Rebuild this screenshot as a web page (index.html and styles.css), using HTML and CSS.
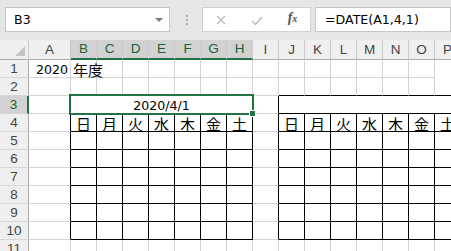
FILE: index.html
```html
<!DOCTYPE html>
<html lang="ja">
<head>
    <meta charset="UTF-8">
    <title>2020 年度 - Excel</title>
    <link rel="stylesheet" href="styles.css">
</head>
<body>
    <div class="formula-bar">
        <div class="name-box">B3<span class="dropdown"></span></div>
        <span class="grip"></span>
        <div class="fx-buttons">
            <span class="btn btn-cancel">
                <svg width="10" height="10" viewBox="0 0 10 10"><path d="M1 1 L9 9 M9 1 L1 9" stroke="#b9b9b9" stroke-width="1.2" fill="none"/></svg>
            </span>
            <span class="btn btn-enter">
                <svg width="12" height="10" viewBox="0 0 12 10"><path d="M1 5 L4.5 8.5 L11 1" stroke="#b9b9b9" stroke-width="1.3" fill="none"/></svg>
            </span>
            <span class="btn btn-fx">f<sub>x</sub></span>
        </div>
        <div class="formula">=DATE(A1,4,1)</div>
    </div>

    <div class="sheet">
        <table class="grid">
            <thead>
                <tr>
                    <th class="corner"><span class="corner-tri"></span></th>
                    <th class="col-a">A</th>
                    <th class="sel">B</th><th class="sel">C</th><th class="sel">D</th><th class="sel">E</th><th class="sel">F</th><th class="sel">G</th><th class="sel">H</th>
                    <th>I</th><th>J</th><th>K</th><th>L</th><th>M</th><th>N</th><th>O</th><th>P</th>
                </tr>
            </thead>
            <tbody>
                <tr>
                    <th>1</th><td class="num">2020</td><td class="jp">年度</td>
                    <td></td><td></td><td></td><td></td><td></td><td></td><td></td><td></td><td></td><td></td><td></td><td></td><td></td>
                </tr>
                <tr class="pre">
                    <th>2</th><td class="gap"></td>
                    <td></td><td></td><td></td><td></td><td></td><td></td><td></td>
                    <td class="gap"></td>
                    <td></td><td></td><td></td><td></td><td></td><td></td><td></td>
                </tr>
                <tr class="cal">
                    <th class="sel-row">3</th><td class="gap"></td>
                    <td colspan="7" class="title">2020/4/1</td>
                    <td class="gap"></td>
                    <td colspan="7" class="title"></td>
                </tr>
                <tr class="cal days">
                    <th>4</th><td class="gap"></td>
                    <td>日</td><td>月</td><td>火</td><td>水</td><td>木</td><td>金</td><td>土</td>
                    <td class="gap"></td>
                    <td>日</td><td>月</td><td>火</td><td>水</td><td>木</td><td>金</td><td>土</td>
                </tr>
                <tr class="cal">
                    <th>5</th><td class="gap"></td>
                    <td></td><td></td><td></td><td></td><td></td><td></td><td></td>
                    <td class="gap"></td>
                    <td></td><td></td><td></td><td></td><td></td><td></td><td></td>
                </tr>
                <tr class="cal">
                    <th>6</th><td class="gap"></td>
                    <td></td><td></td><td></td><td></td><td></td><td></td><td></td>
                    <td class="gap"></td>
                    <td></td><td></td><td></td><td></td><td></td><td></td><td></td>
                </tr>
                <tr class="cal">
                    <th>7</th><td class="gap"></td>
                    <td></td><td></td><td></td><td></td><td></td><td></td><td></td>
                    <td class="gap"></td>
                    <td></td><td></td><td></td><td></td><td></td><td></td><td></td>
                </tr>
                <tr class="cal">
                    <th>8</th><td class="gap"></td>
                    <td></td><td></td><td></td><td></td><td></td><td></td><td></td>
                    <td class="gap"></td>
                    <td></td><td></td><td></td><td></td><td></td><td></td><td></td>
                </tr>
                <tr class="cal">
                    <th>9</th><td class="gap"></td>
                    <td></td><td></td><td></td><td></td><td></td><td></td><td></td>
                    <td class="gap"></td>
                    <td></td><td></td><td></td><td></td><td></td><td></td><td></td>
                </tr>
                <tr class="cal">
                    <th>10</th><td class="gap"></td>
                    <td></td><td></td><td></td><td></td><td></td><td></td><td></td>
                    <td class="gap"></td>
                    <td></td><td></td><td></td><td></td><td></td><td></td><td></td>
                </tr>
                <tr>
                    <th>11</th><td></td>
                    <td></td><td></td><td></td><td></td><td></td><td></td><td></td>
                    <td></td>
                    <td></td><td></td><td></td><td></td><td></td><td></td><td></td>
                </tr>
            </tbody>
        </table>

        <!-- active cell B3:H3 -->
        <div class="selection"><span class="fill-handle"></span></div>
    </div>
</body>
</html>
```

FILE: styles.css
```css
* {
    box-sizing: border-box;
}

body {
    margin: 0;
    width: 451px;
    height: 251px;
    overflow: hidden;
    background-color: #fff;
    color: #000;
    font-family: "DejaVu Sans", "Noto Sans CJK JP", sans-serif;
    font-size: 12.6px;
}

/* formula bar */

.formula-bar {
    display: flex;
    align-items: flex-start;
    height: 40px;
    padding: 7px 0 0 5px;
    background-color: #e6e6e6;
}

.name-box {
    position: relative;
    width: 165px;
    height: 25px;
    padding-left: 8px;
    line-height: 23px;
    background-color: #fff;
    border: 1px solid #c6c6c6;
}

.dropdown {
    position: absolute;
    right: 6px;
    top: 10px;
    border-left: 4px solid transparent;
    border-right: 4px solid transparent;
    border-top: 4px solid #7a7a7a;
}

.grip {
    width: 2px;
    height: 2px;
    margin: 8px 14px 0 16px;
    background-color: #ababab;
    box-shadow: 0 4px #ababab, 0 8px #ababab;
}

.fx-buttons {
    display: flex;
    align-items: center;
    width: 109px;
    height: 25px;
    background-color: #fff;
    border: 1px solid #d0d0d0;
}

.btn {
    display: flex;
    justify-content: center;
    align-items: center;
}

.btn-cancel {
    width: 36px;
}

.btn-enter {
    width: 38px;
    padding-top: 2px;
}

.btn-fx {
    width: 36px;
    padding-bottom: 3px;
    color: #555;
    font-family: "Liberation Serif", serif;
    font-style: italic;
    font-weight: bold;
    font-size: 14px;
}

.btn-fx sub {
    font-size: 10px;
    vertical-align: -2px;
}

.formula {
    flex: 1;
    height: 25px;
    margin-left: 4px;
    padding-left: 9px;
    line-height: 23px;
    background-color: #fff;
    border: 1px solid #c6c6c6;
}

/* sheet */

.sheet {
    position: relative;
}

.grid {
    width: 461px;
    table-layout: fixed;
    border-collapse: separate;
    border-spacing: 0;
}

.grid th,
.grid td {
    height: 18px;
    padding: 0;
    line-height: 14px;
    vertical-align: bottom;
    white-space: nowrap;
    overflow: visible;
    border-right: 1px solid #d4d4d4;
    border-bottom: 1px solid #d4d4d4;
}

.grid th {
    font-family: "Liberation Sans", sans-serif;
    font-size: 13.5px;
    font-weight: normal;
    color: #444;
    text-align: center;
    background-color: #efefef;
}

.grid thead th {
    width: 26px;
    height: 20px;
    vertical-align: middle;
    border-right-color: #cbcbcb;
    border-bottom-color: #ababab;
}

.grid tbody th {
    padding-bottom: 1px;
    border-right-color: #ababab;
    border-bottom-color: #d6d6d6;
}

.grid .corner {
    width: 29px;
    position: relative;
}

.corner-tri {
    position: absolute;
    right: 3px;
    bottom: 3px;
    border-left: 10px solid transparent;
    border-bottom: 10px solid #c4c4c4;
}

.grid .col-a {
    width: 42px;
}

.grid thead th.sel {
    background-color: #d2d2d2;
    color: #1e5e3a;
    border-bottom: 2px solid #217346;
}

.grid tbody th.sel-row {
    background-color: #d2d2d2;
    color: #1e5e3a;
    border-right: 2px solid #217346;
}

.num {
    text-align: right;
    padding-right: 2px !important;
}

.jp {
    padding-left: 2px !important;
    font-family: "Noto Sans CJK JP", sans-serif;
    font-size: 15px;
}

.title {
    text-align: center;
}

.days td {
    text-align: center;
    font-family: "Noto Sans CJK JP", sans-serif;
    font-size: 15px;
}

/* black borders of both calendars */

.pre td {
    border-bottom-color: #000;
}

.cal td {
    border-right-color: #000;
    border-bottom-color: #000;
}

.pre td.gap,
.cal td.gap {
    border-bottom-color: #d4d4d4;
}

.pre td.gap {
    border-right-color: #d4d4d4;
}

.selection {
    position: absolute;
    left: 69px;
    top: 54px;
    width: 185px;
    height: 21px;
    border: 2px solid #217346;
}

.fill-handle {
    position: absolute;
    right: -3px;
    bottom: -3px;
    width: 5px;
    height: 5px;
    background-color: #217346;
    box-shadow: 0 0 0 1px #fff;
}
```
